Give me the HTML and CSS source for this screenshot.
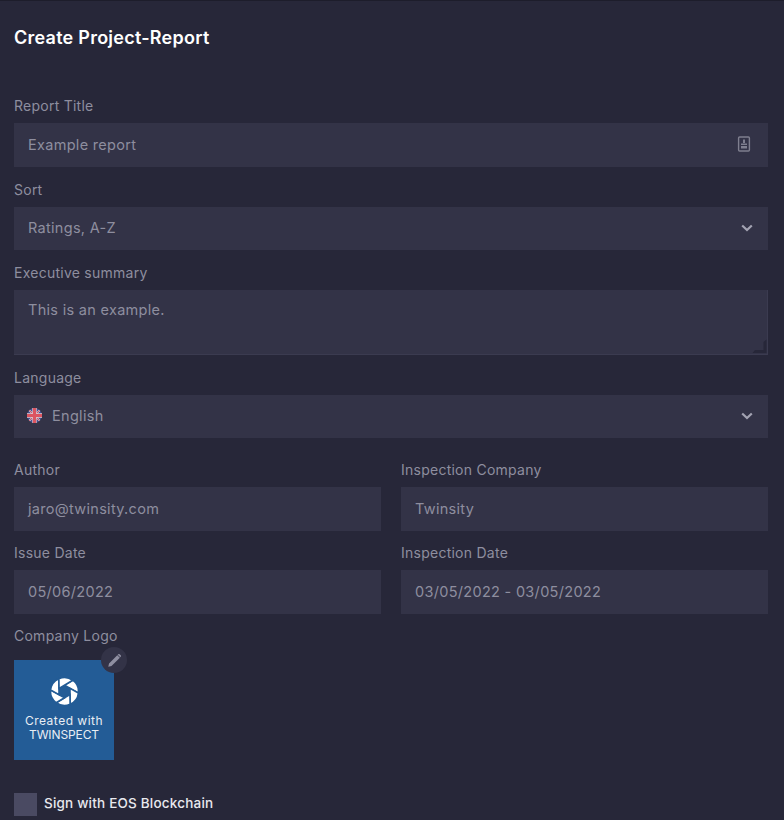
FILE: index.html
```html
<!DOCTYPE html>
<html lang="en">
<head>
  <meta charset="UTF-8" />
  <title>Create Project-Report</title>
  <link rel="stylesheet" href="styles.css">
</head>
<body>
  <h1 class="title">Create Project-Report</h1>

  <div class="field field-first">
    <label class="label">Report Title</label>
    <div class="input">
      <span>Example report</span>
      <svg class="id-icon" width="14" height="16" viewBox="0 0 14 16" fill="none">
        <rect x="1.6" y="1" width="10.8" height="14" rx="1" stroke="#7f7f8f" stroke-width="1.4"/>
        <rect x="6" y="3.5" width="2" height="3.5" fill="#7f7f8f"/>
        <rect x="4" y="7.5" width="6" height="1.5" fill="#7f7f8f"/>
        <rect x="4" y="10" width="6" height="2.5" fill="#7f7f8f"/>
      </svg>
    </div>
  </div>

  <div class="field">
    <label class="label">Sort</label>
    <div class="input">
      <span>Ratings, A-Z</span>
      <svg class="chevron" width="12" height="8" viewBox="0 0 12 8" fill="none"><path d="M1.2 1.5 6 6l4.8-4.5" stroke="#a3a3b2" stroke-width="2.2"/></svg>
    </div>
  </div>

  <div class="field">
    <label class="label">Executive summary</label>
    <div class="input textarea">
      <span>This is an example.</span>
      <svg class="resizer" width="16" height="16" viewBox="0 0 16 16" fill="none"><path d="M15.5 1.5V15H1.5L4 12h8.5V4z" fill="#272739"/></svg>
    </div>
  </div>

  <div class="field">
    <label class="label">Language</label>
    <div class="input">
      <span class="lang">
        <svg class="flag" width="15" height="15" viewBox="0 0 16 16">
          <circle cx="8" cy="8" r="8" fill="#46508f"/>
          <path d="M2.5 2.5l11 11M13.5 2.5l-11 11" stroke="#d9ccd3" stroke-width="1.8"/>
          <path d="M2.5 2.5l11 11M13.5 2.5l-11 11" stroke="#d4505c" stroke-width="1"/>
          <path d="M8 0v16M0 8h16" stroke="#e3d0d4" stroke-width="4.6"/>
          <path d="M8 0v16M0 8h16" stroke="#dc5560" stroke-width="3.4"/>
        </svg>
        English
      </span>
      <svg class="chevron" width="12" height="8" viewBox="0 0 12 8" fill="none"><path d="M1.2 1.5 6 6l4.8-4.5" stroke="#a3a3b2" stroke-width="2.2"/></svg>
    </div>
  </div>

  <div class="columns">
    <div class="field">
      <label class="label">Author</label>
      <div class="input"><span>jaro@twinsity.com</span></div>
    </div>
    <div class="field">
      <label class="label">Inspection Company</label>
      <div class="input"><span>Twinsity</span></div>
    </div>
    <div class="field">
      <label class="label">Issue Date</label>
      <div class="input"><span>05/06/2022</span></div>
    </div>
    <div class="field">
      <label class="label">Inspection Date</label>
      <div class="input"><span>03/05/2022 - 03/05/2022</span></div>
    </div>
  </div>

  <div class="field logo-field">
    <label class="label">Company Logo</label>
    <div class="logo">
      <svg width="29" height="29" viewBox="-15 -15 30 30">
        <g fill="#fff" stroke="#235c96" stroke-width="1.7">
          <path id="blade" d="M0-6.5 8.6-11.7A14.5 14.5 0 0 1 14.4 1.6z"/>
          <use href="#blade" transform="rotate(60)"/>
          <use href="#blade" transform="rotate(120)"/>
          <use href="#blade" transform="rotate(180)"/>
          <use href="#blade" transform="rotate(240)"/>
          <use href="#blade" transform="rotate(300)"/>
        </g>
      </svg>
      <div class="logo-text"><span class="logo-line">Created with</span><br><span class="logo-brand">TWINSPECT</span></div>
      <button class="edit-btn">
        <svg width="15" height="15" viewBox="0 0 14 14"><path d="M1.2 12.8l.7-3L9.6 2l2.4 2.4-7.8 7.7zM10.4 1.2a1 1 0 0 1 1.4 0l1 1a1 1 0 0 1 0 1.4l-.4.4-2.4-2.4z" fill="#8f8fa1"/></svg>
      </button>
    </div>
  </div>

  <div class="check-row">
    <span class="checkbox"></span>
    <span class="check-label">Sign with EOS Blockchain</span>
  </div>
</body>
</html>
```

FILE: styles.css
```css
* { margin: 0; padding: 0; box-sizing: border-box; }
html, body { height: 820px; overflow: hidden; }
body {
  font-family: 'Inter', 'Noto Sans', sans-serif;
  background: #272739;
  border-top: 1px solid #1d1d2b;
  padding: 0 16px 0 14px;
  color: #8e8e9f;
}
.title {
  font-size: 18px;
  line-height: 24px;
  font-weight: 600;
  color: #fff;
  margin-top: 25px;
  letter-spacing: 0.25px;
}
.field { display: flex; flex-direction: column; }
.field-first { margin-top: 46px; }
.field + .field { margin-top: 13px; }
.label {
  font-size: 14px;
  line-height: 20px;
  height: 27px;
  color: #8e8e9f;
  letter-spacing: 0.25px;
}
.input {
  height: 43.5px;
  background: #333347;
  display: flex;
  align-items: center;
  justify-content: space-between;
  padding: 0 15px 1px 14px;
  font-size: 14.5px;
  color: #8e8e9f;
  letter-spacing: 0.3px;
}
.id-icon { margin-right: 2px; }
.textarea {
  height: 64.5px;
  align-items: flex-start;
  padding-top: 11px;
  position: relative;
  border-bottom: 1px solid #3b3b50;
  border-right: 1px solid #3b3b50;
}
.resizer { position: absolute; right: 0; bottom: 0; }
.lang { display: flex; align-items: center; gap: 10px; }
.flag { margin-left: -1px; }
.columns {
  display: grid;
  grid-template-columns: 367px 367px;
  column-gap: 20px;
  row-gap: 12.5px;
  margin-top: 22px;
}
.columns .field + .field { margin-top: 0; }
.logo-field { margin-top: 12.5px; }
.logo {
  position: relative;
  width: 100px;
  height: 100px;
  background: #235c96;
  margin-top: 7px;
  display: flex;
  flex-direction: column;
  align-items: center;
  padding-top: 17px;
}
.logo-text {
  margin-top: 8px;
  font-size: 12px;
  line-height: 14px;
  color: #e9eef4;
  text-align: center;
}
.logo-line { letter-spacing: 0.5px; }
.logo-brand { letter-spacing: -0.1px; }
.edit-btn {
  position: absolute;
  top: -13px;
  right: -13px;
  width: 26px;
  height: 26px;
  border: none;
  border-radius: 50%;
  background: #333347;
  display: flex;
  align-items: center;
  justify-content: center;
}
.check-row {
  display: flex;
  align-items: center;
  gap: 7px;
  margin-top: 33px;
}
.checkbox {
  width: 23px;
  height: 23px;
  background: #4a4a62;
}
.check-label {
  font-size: 13.5px;
  font-weight: 500;
  letter-spacing: 0.2px;
  color: #e9e9ef;
  padding-bottom: 3px;
}
```
